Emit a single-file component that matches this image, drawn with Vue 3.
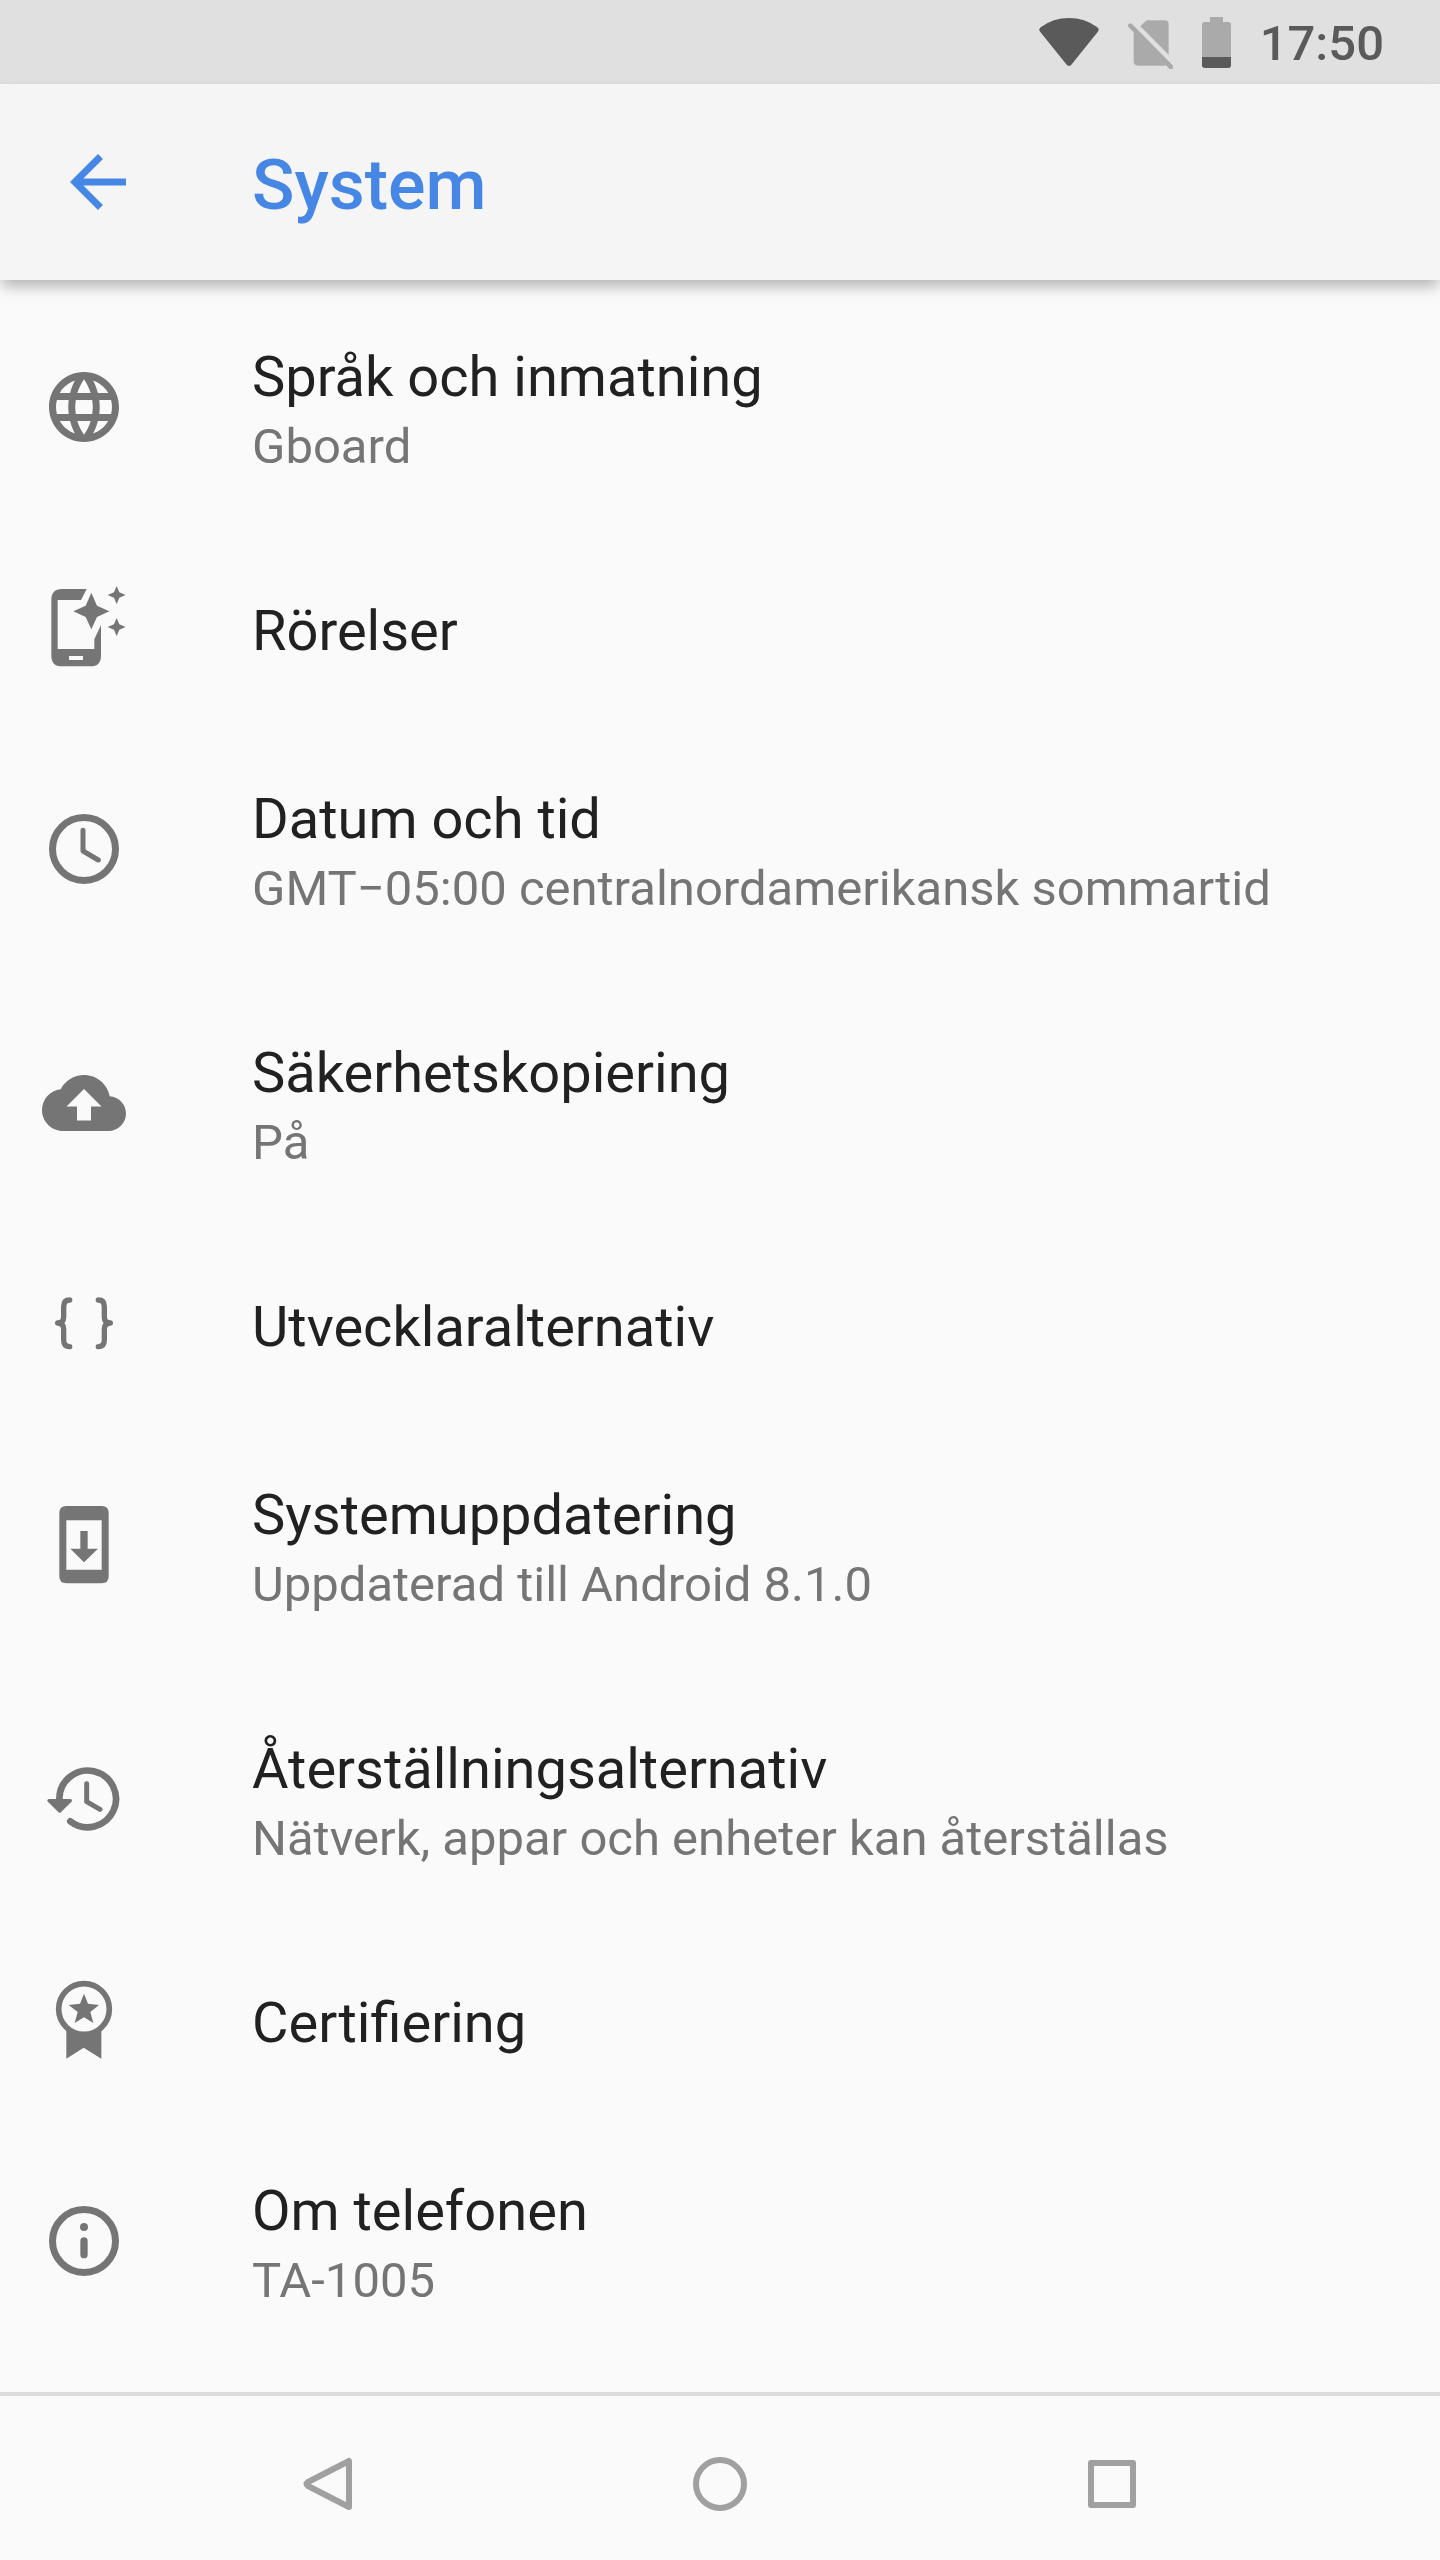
<script setup>
const items = [
  { id: 'language', title: 'Språk och inmatning', summary: 'Gboard' },
  { id: 'gestures', title: 'Rörelser' },
  { id: 'clock', title: 'Datum och tid', summary: 'GMT−05:00 centralnordamerikansk sommartid' },
  { id: 'backup', title: 'Säkerhetskopiering', summary: 'På' },
  { id: 'developer', title: 'Utvecklaralternativ' },
  { id: 'update', title: 'Systemuppdatering', summary: 'Uppdaterad till Android 8.1.0' },
  { id: 'reset', title: 'Återställningsalternativ', summary: 'Nätverk, appar och enheter kan återställas' },
  { id: 'certificate', title: 'Certifiering' },
  { id: 'about', title: 'Om telefonen', summary: 'TA-1005' },
]
</script>

<template>
  <div class="screen">
    <div class="status">
      <svg class="wifi" viewBox="0 0 180 144" aria-hidden="true">
        <path d="M4 42Q-3 35 5 28Q42 0 90 0Q138 0 175 28Q183 35 176 42L97 140Q90 147 83 140Z" />
      </svg>
      <svg class="sim" viewBox="0 0 135 147" aria-hidden="true">
        <path d="M37 19L51 5Q55 1 61 1H110Q122 1 122 13V104ZM17 33L115 135Q112 137 107 137H31Q17 137 17 123Z" />
        <path class="slash" d="M7 17L129 141" />
      </svg>
      <svg class="battery" viewBox="0 0 87 153" aria-hidden="true">
        <path class="empty" d="M24 0H63V15H79Q87 15 87 23V120H0V23Q0 15 8 15H24Z" />
        <path d="M0 120H87V145Q87 153 79 153H8Q0 153 0 145Z" />
      </svg>
      <time class="time">17:50</time>
    </div>

    <header class="bar">
      <button class="back" type="button" aria-label="Tillbaka">
        <svg viewBox="0 0 24 24"><path d="M20 11H7.83l5.59-5.59L12 4l-8 8 8 8 1.41-1.41L7.83 13H20v-2z" /></svg>
      </button>
      <h1>System</h1>
    </header>

    <main class="list">
      <a v-for="item in items" :key="item.id" class="row" :href="'#' + item.id">
        <svg v-if="item.id === 'language'" class="icon" viewBox="0 0 24 24">
          <path d="M11.99 2C6.47 2 2 6.48 2 12s4.47 10 9.99 10C17.52 22 22 17.52 22 12S17.52 2 11.99 2zm6.93 6h-2.95c-.32-1.25-.78-2.45-1.38-3.56 1.84.63 3.37 1.91 4.33 3.56zM12 4.04c.83 1.2 1.48 2.53 1.91 3.96h-3.82c.43-1.43 1.08-2.76 1.91-3.96zM4.26 14C4.1 13.36 4 12.69 4 12s.1-1.36.26-2h3.38c-.08.66-.14 1.32-.14 2 0 .68.06 1.34.14 2H4.26zm.82 2h2.95c.32 1.25.78 2.45 1.38 3.56-1.84-.63-3.37-1.9-4.33-3.56zm2.95-8H5.08c.96-1.66 2.49-2.93 4.33-3.56C8.81 5.55 8.35 6.75 8.03 8zM12 19.96c-.83-1.2-1.48-2.53-1.91-3.96h3.82c-.43 1.43-1.08 2.76-1.91 3.96zM14.34 14H9.66c-.09-.66-.16-1.32-.16-2 0-.68.07-1.35.16-2h4.68c.09.65.16 1.32.16 2 0 .68-.07 1.34-.16 2zm.25 5.56c.6-1.11 1.06-2.31 1.38-3.56h2.95c-.96 1.65-2.49 2.93-4.33 3.56zM16.36 14c.08-.66.14-1.32.14-2 0-.68-.06-1.34-.14-2h3.38c.16.64.26 1.31.26 2s-.1 1.36-.26 2h-3.38z" />
        </svg>
        <svg v-else-if="item.id === 'gestures'" class="icon" viewBox="0 0 252 252">
          <path fill-rule="evenodd" d="M60 9H134L117 42H47V189H157V160L177 117V209Q177 241 145 241H60Q28 241 28 209V41Q28 9 60 9ZM81 210V222H123V210Z" />
          <path d="M148 20L165 59L202 76L165 93L148 130L131 93L94 76L131 59Z" />
          <path d="M224 0L232 19L251 27L232 35L224 54L216 35L197 27L216 19Z" />
          <path d="M224 96L232 115L251 123L232 131L224 150L216 131L197 123L216 115Z" />
        </svg>
        <svg v-else-if="item.id === 'clock'" class="icon" viewBox="0 0 252 252">
          <circle class="line" cx="126" cy="126" r="94.5" stroke-width="21" />
          <path class="line" stroke-width="15" d="M123 70V132L169 159" />
        </svg>
        <svg v-else-if="item.id === 'backup'" class="icon" viewBox="0 0 24 24">
          <path d="M19.35 10.04C18.67 6.59 15.64 4 12 4 9.11 4 6.6 5.64 5.35 8.04 2.34 8.36 0 10.91 0 14c0 3.31 2.69 6 6 6h13c2.76 0 5-2.24 5-5 0-2.64-2.05-4.78-4.65-4.96zM14 13v4h-4v-4H7l5-5 5 5h-3z" />
        </svg>
        <svg v-else-if="item.id === 'developer'" class="icon" viewBox="0 0 252 252">
          <path class="line" stroke-width="16" d="M83 54Q65 54 65 74V105Q65 123 47 123Q65 123 65 142V174Q65 194 83 194" />
          <path class="line" stroke-width="16" d="M169 54Q187 54 187 74V105Q187 123 205 123Q187 123 187 142V174Q187 194 169 194" />
        </svg>
        <svg v-else-if="item.id === 'update'" class="icon" viewBox="0 0 252 252">
          <path fill-rule="evenodd" d="M73 9H179Q200 9 200 30V220Q200 241 179 241H73Q52 241 52 220V30Q52 9 73 9ZM73 52V200H179V52Z" />
          <path d="M115 84H137V137H168L126 178L85 137H115Z" />
        </svg>
        <svg v-else-if="item.id === 'reset'" class="icon" viewBox="0 0 252 252">
          <path class="line" stroke-width="20" d="M52 130V126A85 85 0 1 1 85 193" />
          <path class="line" stroke-width="15" d="M134 80V134L174 157" />
          <path class="tip" d="M21 131H85L53 162Z" />
        </svg>
        <svg v-else-if="item.id === 'certificate'" class="icon" viewBox="0 0 252 252">
          <circle class="line" cx="126" cy="93" r="76" stroke-width="17" />
          <path d="M73 154Q125 184 178 154V242L125 209L73 242Z" />
          <path d="M126 47L138 77L171 81L145 102L154 135L126 118L98 135L107 102L80 81L114 77Z" />
        </svg>
        <svg v-else class="icon" viewBox="0 0 252 252">
          <circle class="line" cx="126" cy="126" r="94.5" stroke-width="21" />
          <circle cx="126" cy="84" r="12" />
          <path class="line" stroke-width="22" d="M126 126V167" />
        </svg>
        <span class="text">
          <span class="title">{{ item.title }}</span>
          <span v-if="item.summary" class="summary">{{ item.summary }}</span>
        </span>
      </a>
    </main>

    <nav class="nav">
      <button type="button" aria-label="Bakåt">
        <svg viewBox="0 0 54 54"><path d="M48 4V50L7 29Q4 27 7 25Z" /></svg>
      </button>
      <button type="button" aria-label="Hem">
        <svg viewBox="0 0 54 54"><circle cx="27" cy="27" r="24" /></svg>
      </button>
      <button type="button" aria-label="Översikt">
        <svg viewBox="0 0 54 54"><rect x="6" y="6" width="42" height="42" /></svg>
      </button>
    </nav>
  </div>
</template>

<style>
body {
  margin: 0;
  background: #fafafa;
}
</style>

<style scoped>
.screen {
  display: flex;
  flex-direction: column;
  min-height: 100vh;
  font-family: Roboto, sans-serif;
  color: #212121;
  background: #fafafa;
}

.status {
  display: flex;
  align-items: center;
  justify-content: flex-end;
  gap: 29px;
  height: 84px;
  padding-right: 56px;
  background: #e0e0e0;
  color: #5a5a5a;
}

svg {
  display: block;
  flex: none;
  fill: currentColor;
}

.wifi {
  width: 60px;
  height: 48px;
}

.sim {
  width: 45px;
  height: 49px;
  margin-top: 4px;
  color: #aaaaaa;
}

.slash {
  stroke: currentColor;
  stroke-width: 14;
  stroke-linecap: round;
}

.battery {
  width: 29px;
  height: 51px;
}

.empty {
  fill: #aaaaaa;
}

.time {
  padding-top: 4px;
  font-size: 49px;
  font-weight: 500;
  line-height: 58px;
}

.bar {
  display: flex;
  align-items: center;
  height: 196px;
  padding: 0 56px;
  background: #f5f5f5;
  color: #4686e4;
  box-shadow: 0 8px 14px -2px rgba(0, 0, 0, 0.3);
}

button {
  padding: 0;
  border: 0;
  background: none;
  color: inherit;
}

.back {
  width: 84px;
  margin-right: 112px;
}

.back svg {
  width: 84px;
  height: 84px;
}

h1 {
  margin: 0;
  padding-top: 6px;
  font-size: 70px;
  font-weight: 500;
  line-height: 82px;
}

.list {
  flex: 1;
}

.row {
  display: flex;
  align-items: center;
  gap: 126px;
  padding: 0 42px;
  color: inherit;
  text-decoration: none;
}

.icon {
  width: 84px;
  height: 84px;
  color: #757575;
}

.line {
  fill: none;
  stroke: currentColor;
  stroke-linecap: round;
  stroke-linejoin: round;
}

.tip {
  stroke: currentColor;
  stroke-width: 10;
  stroke-linejoin: round;
}

.text {
  display: flex;
  flex-direction: column;
  gap: 8px;
  padding: 64px 0 58px;
}

.title {
  font-size: 56px;
  line-height: 66px;
}

.summary {
  font-size: 49px;
  line-height: 58px;
  color: #757575;
}

.nav {
  display: grid;
  grid-template-columns: repeat(3, 1fr);
  height: 152px;
  padding: 12px 132px 0;
  border-top: 4px solid #dcdcdc;
  color: #a0a0a0;
}

.nav button {
  display: flex;
  align-items: center;
  justify-content: center;
}

.nav svg {
  width: 54px;
  height: 54px;
  fill: none;
  stroke: currentColor;
  stroke-width: 6;
  stroke-linejoin: round;
}
</style>
